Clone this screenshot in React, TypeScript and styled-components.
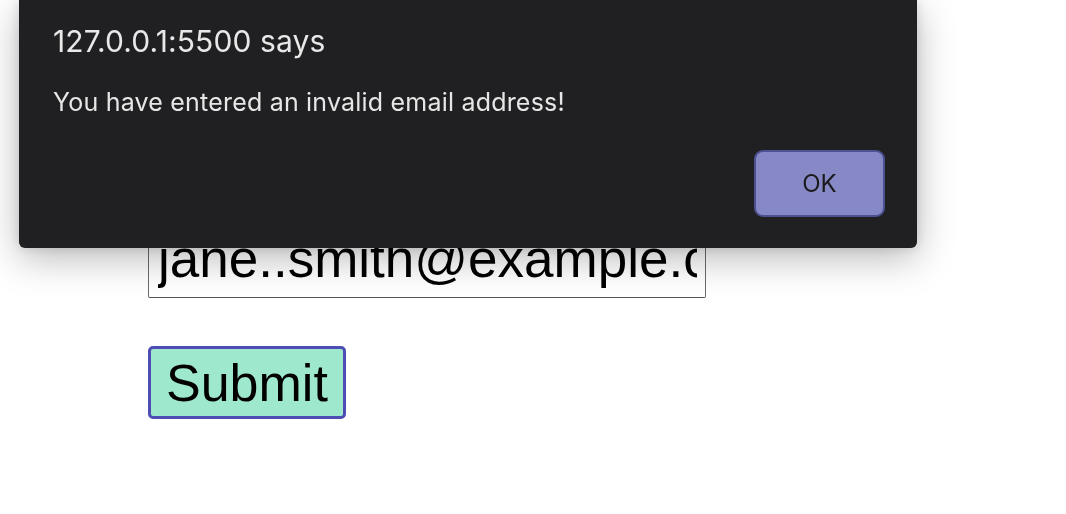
import React from "react";
import styled, { createGlobalStyle } from "styled-components";

const GlobalStyle = createGlobalStyle`
  html, body {
    margin: 0;
    padding: 0;
    background: #ffffff;
  }
  body {
    font-family: "Liberation Sans", Arial, sans-serif;
  }
`;

const Page = styled.main`
  display: flex;
  flex-direction: column;
  align-items: flex-start;
  gap: 48px;
  padding: 218px 0 0 148px;
  min-height: 514px;
  box-sizing: border-box;
`;

const EmailInput = styled.input`
  box-sizing: border-box;
  width: 558px;
  padding: 9px 8px 9px 9px;
  border: 1px solid #6b6b6b;
  border-bottom-color: #555555;
  border-radius: 2px;
  background: #ffffff;
  color: #000000;
  font-family: "Liberation Sans", Arial, sans-serif;
  font-size: 53px;
  line-height: 60px;
  height: 80px;
  outline: none;
`;

const SubmitButton = styled.button`
  box-sizing: border-box;
  height: 73px;
  padding: 0 15px;
  border: 3px solid #4d4db4;
  border-radius: 5px;
  background: #9ee9cd;
  color: #000000;
  font-family: "Liberation Sans", Arial, sans-serif;
  font-size: 52px;
  line-height: 60px;
  cursor: pointer;
`;

const Dialog = styled.div`
  position: fixed;
  top: 0;
  left: 19px;
  width: 898px;
  height: 248px;
  box-sizing: border-box;
  padding: 23px 32px 31px 34px;
  display: flex;
  flex-direction: column;
  background: #202022;
  border-radius: 0 0 6px 6px;
  box-shadow: 0 10px 38px rgba(0, 0, 0, 0.28), 0 0 12px rgba(0, 0, 0, 0.12);
  font-family: Inter, "Noto Sans", sans-serif;
  color: #e6e6e6;
`;

const Title = styled.h1`
  margin: 0;
  font-size: 30px;
  line-height: 36px;
  font-weight: 400;
  letter-spacing: 0.1px;
  color: #e8e8e8;
`;

const Message = styled.p`
  margin: 28px 0 0;
  font-size: 25px;
  line-height: 30px;
  font-weight: 400;
  letter-spacing: 0.2px;
  color: #e6e6e6;
`;

const Actions = styled.div`
  display: flex;
  justify-content: flex-end;
  margin-top: 33px;
`;

const OkButton = styled.button`
  box-sizing: border-box;
  width: 131px;
  height: 67px;
  border: 2px solid #4b5191;
  border-radius: 9px;
  background: #8689c6;
  color: #1a1a1c;
  font-family: Inter, "Noto Sans", sans-serif;
  font-size: 24px;
  font-weight: 400;
  cursor: pointer;
`;

export default function App() {
  return (
    <>
      <GlobalStyle />
      <Page>
        <EmailInput type="text" defaultValue="jane..smith@example.com" readOnly />
        <SubmitButton type="button">Submit</SubmitButton>
      </Page>
      <Dialog role="alertdialog">
        <Title>127.0.0.1:5500 says</Title>
        <Message>You have entered an invalid email address!</Message>
        <Actions>
          <OkButton type="button">OK</OkButton>
        </Actions>
      </Dialog>
    </>
  );
}
